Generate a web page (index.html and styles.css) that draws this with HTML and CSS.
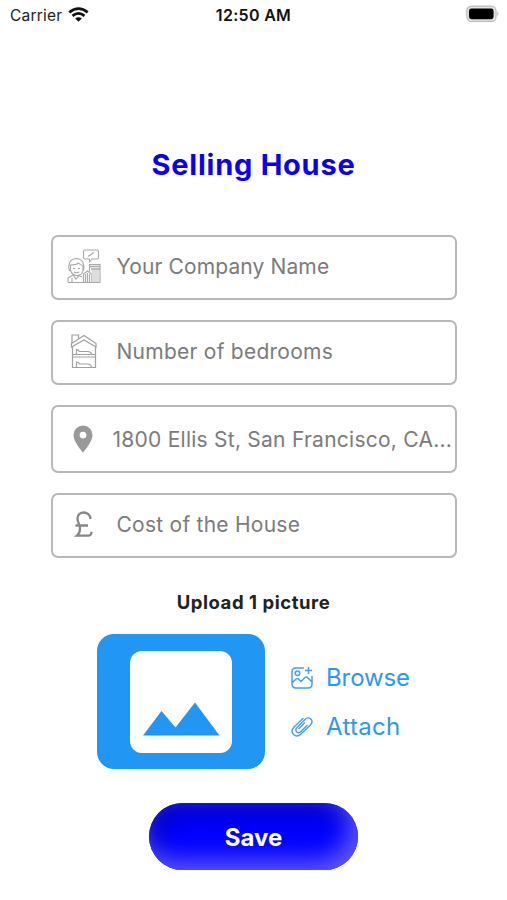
FILE: index.html
```html
<!DOCTYPE html>
<html lang="en">
<head>
<meta charset="utf-8">
<title>Selling House</title>
<link rel="stylesheet" href="styles.css">
</head>
<body>
<header class="status">
  <div class="carrier"><span>Carrier</span>
    <svg width="21" height="16" viewBox="0 0 21 16" fill="none" stroke="#111" stroke-width="2.7"><path d="M1.3 5.4Q10.5-2.1 19.7 5.4M4.5 8.9Q10.5 4 16.5 8.9"/><path d="M7.2 11.5Q10.5 8.8 13.8 11.5L10.5 14.8Z" fill="#111" stroke="none"/></svg>
  </div>
  <span class="time">12:50 AM</span>
  <svg class="battery" width="34" height="18" viewBox="0 0 34 18"><rect x=".8" y="1.2" width="29.2" height="15.2" rx="4.6" fill="#e4e4e4" stroke="#bbb" stroke-width="1.2"/><rect x="3" y="3.4" width="24.6" height="10.8" rx="2.4" fill="#000"/><path d="M31.4 6.5q2 2.2 0 4.6z" fill="#aaa"/></svg>
</header>
<main>
  <h1>Selling House</h1>
  <form class="form">
    <div class="field">
      <svg class="icon agent" viewBox="0 0 34 36" fill="none" stroke="#a8a8a8" stroke-width="1.100"><path d="M18 2h12q1.500 0 1.500 1.500v6q0 1.500-1.500 1.500h-5l-2.500 3v-3H18q-1.500 0-1.500-1.500v-6Q16.500 2 18 2zM21 8.500l6-4M3 23q-2-2-1-6 1-6 7-6.500 7 .5 7.500 6 1 4-.5 6.500M3.500 17q6 0 8-2 2 2.500 4.500 2.500v5q-1 5-6 5T3.500 22zM1 34.500v-4q1-2 5.500-3L9 31l3-3.500 3 1.500M1 34.500h32V16.500H22.500v7M16.500 34.500v-8.500l4-3 4 3v8.500M18.500 26v8M20.500 25v9M22.500 26v8M5 30v4M6 20.500h2M11 20.500h2M7 24q2.500 1.500 5 0"/><path d="M23 18.500h10M24 21h9M25 29h8M25 32h8" stroke-width="1.500"/><path d="M24.500 22h8v12h-8z" fill="#ddd" stroke="none"/></svg>
      <span class="label company">Your Company Name</span>
    </div>
    <div class="field">
      <svg class="icon house" viewBox="0 0 34 36" fill="none" stroke="#a0a0a0" stroke-width="1.200"><path d="M4.500 14V10.500L17 2.500l12 8V14L17 7 4.500 14zM5 10V2h6.500v4M5.500 14v20.500h23V14M5.500 21.500h23M5.500 24h23M9.500 21v-4.500q2 0 3 2h8q3.500 0 4 2.500M9.500 34v-5q2 0 3 2h8q3.500 0 4 3"/></svg>
      <span class="label bedrooms">Number of bedrooms</span>
    </div>
    <div class="field address-field">
      <svg class="icon" viewBox="0 0 34 36"><path fill="#999" fill-rule="evenodd" d="M16 4.500a9.500 9.500 0 0 0-9.500 9.500C6.500 21 16 31.500 16 31.500s9.500-10.500 9.500-17.500A9.500 9.500 0 0 0 16 4.500zm0 6.200a3.400 3.400 0 1 1 0 6.800 3.400 3.400 0 0 1 0-6.800z"/></svg>
      <span class="label address">1800 Ellis St, San Francisco, CA...</span>
    </div>
    <div class="field">
      <svg class="icon" viewBox="0 0 34 36" fill="none" stroke="#888" stroke-width="2.300"><path d="M23.500 13C23 4.500 10.500 4.300 10.500 12.500c0 4 2.500 6 2.500 10 0 3.500-1 5.500-3 7.200h11q3.500 0 3.500-4M8.500 19.500H21"/></svg>
      <span class="label cost">Cost of the House</span>
    </div>
  </form>
  <h2>Upload 1 picture</h2>
  <section class="upload">
    <div class="preview"><svg width="102" height="102" viewBox="0 0 102 102"><rect width="102" height="102" rx="12" fill="#fff"/><path d="M13 84.500 31.500 60 45.500 76.500 65 51.500 89.500 84.500z" fill="#2196f3"/></svg></div>
    <div class="actions">
      <div class="action">
        <svg width="24" height="24" viewBox="0 0 24 24" fill="none" stroke="#459fed" stroke-width="1.500"><path d="M14 2H6Q2 2 2 6v12q0 4 4 4h12q4 0 4-4v-8M18.500 1v7M15 4.500h7M2 17l4-4q1.500-1 3 .5l2 2 4-4q1.500-1 3 .5l4 4"/><circle cx="7.500" cy="7.200" r="2.300"/></svg>
        <span class="browse">Browse</span>
      </div>
      <div class="action">
        <svg width="24" height="24" viewBox="0 0 24 24" fill="none" stroke="#459fed" stroke-width="1.400" stroke-linecap="round"><path d="M13 3.500 4 12c-5 5.500 1.500 12 7 7l9.500-9c4-4.500-1.500-9.500-5.500-5.500L7 12.500c-3 3.500 1 7 4 4l6-6M14.500 8l-5.500 5.500"/></svg>
        <span class="attach">Attach</span>
      </div>
    </div>
  </section>
  <button class="save" type="button"><span>Save</span></button>
</main>
</body>
</html>
```
FILE: styles.css
```css
* { box-sizing: border-box; }
body { margin: 0; background: #fff; font-family: Inter, "Liberation Sans", sans-serif; color: #222; height: 900px; overflow: hidden; }
.status { height: 30px; padding: 0 7px 0 10px; display: grid; grid-template-columns: 1fr auto 1fr; align-items: center; font-size: 15.5px; }
.carrier { display: flex; align-items: center; gap: 6px; letter-spacing: .2px; }
.carrier svg { margin-top: -1px; }
.time { font-weight: 600; color: #111; font-size: 16px; letter-spacing: .3px; margin: 0 3px 0 0; }
.battery { justify-self: end; margin-top: -2px; }
main { display: flex; flex-direction: column; align-items: center; }
h1 { margin: 117px 0 0; height: 36px; line-height: 36px; font-size: 29px; font-weight: 700; color: #0b00ee; letter-spacing: .75px; white-space: nowrap; }
.form { width: 406px; margin: 52px 0 0; display: flex; flex-direction: column; gap: 20px; }
.field { height: 65px; border: 2px solid #b8b8b8; border-radius: 7px; display: flex; align-items: center; padding: 0 0 3px 14px; white-space: nowrap; }
.address-field { height: 68px; padding-bottom: 1px; }
.icon { width: 34px; height: 36px; flex: none; margin-right: 16px; }
.address-field .icon { margin-right: 12px; }
.label { font-size: 21px; line-height: 28px; padding-top: 2px; color: #7b7b7b; letter-spacing: .25px; }
.company { letter-spacing: .12px; }
h2 { margin: 32px 0 0; line-height: 24px; font-size: 18.500px; font-weight: 700; letter-spacing: .55px; }
.upload { margin: 20px 0 0 97px; display: flex; gap: 25px; align-self: flex-start; }
.preview { width: 168px; height: 135px; flex: none; border-radius: 17px; background: #2196f3; display: flex; align-items: center; justify-content: center; }
.actions { padding-top: 28px; display: flex; flex-direction: column; gap: 17px; }
.action { display: flex; align-items: center; gap: 12px; height: 32px; font-size: 24px; color: #2f98ee; }
.action span { padding-bottom: 2px; }
.browse { letter-spacing: -.1px; }
.attach { letter-spacing: .3px; }
.save { margin: 34px 0 0; width: 209px; height: 67px; border: 0; border-radius: 34px; background: #00f; color: #fff; font: 700 24px Inter, sans-serif; padding: 2px 0 0; box-shadow: inset -8px -10px 24px #6058ff, inset 5px 8px 26px #0000b4; }
```
